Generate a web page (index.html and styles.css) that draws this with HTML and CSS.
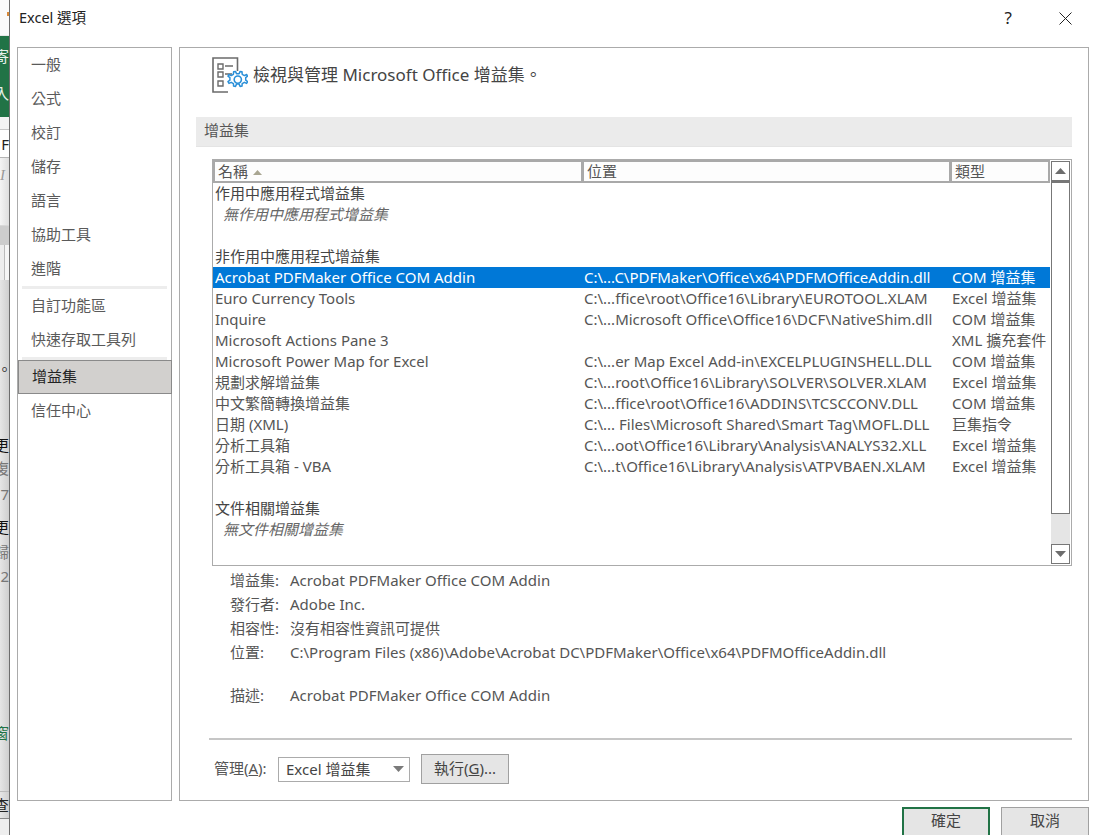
FILE: index.html
```html
<!DOCTYPE html>
<html lang="zh-Hant">
<head>
<meta charset="utf-8">
<title>Excel 選項</title>
<link rel="stylesheet" href="styles.css">
</head>
<body>
<div class="behind">
  <div class="b b-top"><span class="tick"></span></div>
  <div class="b b-green"><span class="b-g1">寄</span><span class="b-g2">入</span></div>
  <div class="b b-gap"></div>
  <div class="b b-f">F</div>
  <div class="b b-it">I</div>
  <div class="b b-band"></div>
  <div class="b b-box"></div>
  <div class="b b-dot">。</div>
  <div class="b t1 k">更</div>
  <div class="b t2">復</div>
  <div class="b t3">7</div>
  <div class="b t4 k">更</div>
  <div class="b t5">歸</div>
  <div class="b t6">2</div>
  <div class="b b-win">窗</div>
  <div class="b b-q">查</div>
  <div class="b b-end"></div>
</div>
<div class="dialog">
  <header class="titlebar">
    <span class="title">Excel 選項</span>
    <span class="help">?</span>
    <svg class="close" width="13" height="13" viewBox="0 0 13 13"><path d="M.5.5l12 12M12.5.5l-12 12" stroke="#222" fill="none"/></svg>
  </header>
  <div class="panes">
    <nav class="nav">
      <div class="nav-item">一般</div>
      <div class="nav-item">公式</div>
      <div class="nav-item">校訂</div>
      <div class="nav-item">儲存</div>
      <div class="nav-item">語言</div>
      <div class="nav-item">協助工具</div>
      <div class="nav-item">進階</div>
      <div class="nav-sep"></div>
      <div class="nav-item">自訂功能區</div>
      <div class="nav-item">快速存取工具列</div>
      <div class="nav-sep"></div>
      <div class="nav-item selected">增益集</div>
      <div class="nav-item">信任中心</div>
    </nav>
    <main class="main">
      <div class="heading">
        <svg class="heading-icon" width="36" height="38" viewBox="0 0 36 38">
          <path d="M25.5 14V1H1v34h15" fill="none" stroke="#6b6b6b" stroke-width="1.6"/>
          <path d="M6 7h5v5H6zM6 15h5v5H6zM6 24h5v5H6z" fill="none" stroke="#6b6b6b" stroke-width="1.4"/>
          <path d="M13 9h8M13 17h7" stroke="#6b6b6b" stroke-width="1.3" fill="none"/>
          <path d="M21.6 14.8l1.9-.4 1 2.4 2.6 0 1-2.4 1.9.4.2 2.5 2.2 1.3 2.2-1.1 1 1.7-1.9 1.5v2.5l1.9 1.5-1 1.7-2.2-1.1-2.2 1.3-.2 2.5-1.9.4-1-2.4h-2.6l-1 2.4-1.9-.4-.2-2.5-2.2-1.3-2.2 1.1-1-1.7 1.9-1.5v-2.5l-1.9-1.5 1-1.7 2.2 1.1 2.2-1.3z" fill="#fff" stroke="#2a8fd8" stroke-width="1.5" stroke-linejoin="round"/>
          <circle cx="25.8" cy="22.6" r="3.6" fill="#fff" stroke="#2a8fd8" stroke-width="1.6"/>
        </svg>
        <span class="heading-text">檢視與管理 Microsoft Office 增益集。</span>
      </div>
      <div class="section">增益集</div>
      <div class="list">
        <div class="list-body">
          <div class="thead">
            <div class="th c1">名稱<svg class="sort" width="9" height="5" viewBox="0 0 9 5"><path d="M4.5 0L9 5H0z" fill="#a9a692"/></svg></div>
            <div class="th c2">位置</div>
            <div class="th c3">類型</div>
          </div>
          <div class="row group"><span class="c1">作用中應用程式增益集</span></div>
          <div class="row empty"><span class="c1">無作用中應用程式增益集</span></div>
          <div class="row"></div>
          <div class="row group"><span class="c1">非作用中應用程式增益集</span></div>
          <div class="row sel"><span class="c1">Acrobat PDFMaker Office COM Addin</span><span class="c2">C:\...C\PDFMaker\Office\x64\PDFMOfficeAddin.dll</span><span class="c3">COM 增益集</span></div>
          <div class="row"><span class="c1">Euro Currency Tools</span><span class="c2">C:\...ffice\root\Office16\Library\EUROTOOL.XLAM</span><span class="c3">Excel 增益集</span></div>
          <div class="row"><span class="c1">Inquire</span><span class="c2">C:\...Microsoft Office\Office16\DCF\NativeShim.dll</span><span class="c3">COM 增益集</span></div>
          <div class="row"><span class="c1">Microsoft Actions Pane 3</span><span class="c2"></span><span class="c3">XML 擴充套件</span></div>
          <div class="row"><span class="c1">Microsoft Power Map for Excel</span><span class="c2">C:\...er Map Excel Add-in\EXCELPLUGINSHELL.DLL</span><span class="c3">COM 增益集</span></div>
          <div class="row"><span class="c1">規劃求解增益集</span><span class="c2">C:\...root\Office16\Library\SOLVER\SOLVER.XLAM</span><span class="c3">Excel 增益集</span></div>
          <div class="row"><span class="c1">中文繁簡轉換增益集</span><span class="c2">C:\...ffice\root\Office16\ADDINS\TCSCCONV.DLL</span><span class="c3">COM 增益集</span></div>
          <div class="row"><span class="c1">日期 (XML)</span><span class="c2">C:\... Files\Microsoft Shared\Smart Tag\MOFL.DLL</span><span class="c3">巨集指令</span></div>
          <div class="row"><span class="c1">分析工具箱</span><span class="c2">C:\...oot\Office16\Library\Analysis\ANALYS32.XLL</span><span class="c3">Excel 增益集</span></div>
          <div class="row"><span class="c1">分析工具箱 - VBA</span><span class="c2">C:\...t\Office16\Library\Analysis\ATPVBAEN.XLAM</span><span class="c3">Excel 增益集</span></div>
          <div class="row"></div>
          <div class="row group"><span class="c1">文件相關增益集</span></div>
          <div class="row empty"><span class="c1">無文件相關增益集</span></div>
        </div>
        <div class="scrollbar">
          <div class="sb-btn"><svg width="11" height="6" viewBox="0 0 11 6"><path d="M5.5 0L11 6H0z" fill="#6d6d6d"/></svg></div>
          <div class="sb-thumb"></div>
          <div class="sb-track"></div>
          <div class="sb-btn"><svg width="11" height="6" viewBox="0 0 11 6"><path d="M0 0h11L5.5 6z" fill="#6d6d6d"/></svg></div>
        </div>
      </div>
      <dl class="details">
        <div class="detail"><dt>增益集:</dt><dd>Acrobat PDFMaker Office COM Addin</dd></div>
        <div class="detail"><dt>發行者:</dt><dd>Adobe Inc.</dd></div>
        <div class="detail"><dt>相容性:</dt><dd>沒有相容性資訊可提供</dd></div>
        <div class="detail"><dt>位置:</dt><dd>C:\Program Files (x86)\Adobe\Acrobat DC\PDFMaker\Office\x64\PDFMOfficeAddin.dll</dd></div>
        <div class="detail detail-desc"><dt>描述:</dt><dd>Acrobat PDFMaker Office COM Addin</dd></div>
      </dl>
      <div class="footer-rule"></div>
      <div class="manage">
        <span class="manage-label">管理(<u>A</u>):</span>
        <div class="select"><span class="select-text">Excel 增益集</span><svg width="11" height="6" viewBox="0 0 11 6"><path d="M0 0h11L5.5 6z" fill="#7a7a7a"/></svg></div>
        <div class="btn go">執行(<u>G</u>)...</div>
      </div>
    </main>
  </div>
  <div class="actions">
    <div class="btn action primary">確定</div>
    <div class="btn action">取消</div>
  </div>
</div>
</body>
</html>
```

FILE: styles.css
```css
* { box-sizing: border-box; }
html, body { margin: 0; height: 835px; overflow: hidden; }
body {
  display: flex;
  background: #fff;
  color: #444;
  font-family: "Noto Sans", "Noto Sans CJK TC", sans-serif;
  font-size: 15px;
}
u { text-underline-offset: 1px; }

/* Sliver of the Excel window behind the dialog */
.behind {
  width: 10px;
  flex: none;
  height: 835px;
  overflow: hidden;
  border-right: 1px solid #6e6e6e;
  background: linear-gradient(to right, #e6e6e6, #cfcfcf);
  color: #777;
}
.b { width: 9px; overflow: hidden; white-space: nowrap; direction: rtl; font-size: 15px; line-height: 16px; }
.b-top { height: 36px; background: #fafafa; border-bottom: 1px solid #e8e8e8; }
.tick { display: block; width: 2px; height: 4px; margin: 12px 0 0 2px; background: #d8893a; }
.b-green { height: 81px; background: #217346; color: #e8f2ec; display: flex; flex-direction: column; padding-top: 12px; gap: 21px; }
.b-gap { height: 13px; background: #f3f3f3; border-bottom: 1px solid #c6c6c6; }
.b-f { height: 28px; line-height: 28px; background: #fff; border-bottom: 1px solid #b5b5b5; color: #222; }
.b-it { height: 67px; padding-top: 9px; color: #999; font-style: italic; font-family: "Liberation Serif", serif; direction: ltr; background: linear-gradient(to right, #f4f4f4, #dedede); }
.b-band { height: 20px; background: #cdcdcd; border-top: 1px solid #d8d8d8; }
.b-box { height: 35px; background: linear-gradient(to right, #eee 0, #eee 4px, #bbb 4px, #bbb 5px, #f6f6f6 5px); }
.b-dot { height: 157px; padding-top: 81px; color: #333; direction: ltr; text-indent: -3px; }
.k { color: #111; }
.t1 { height: 23px; }
.t2 { height: 26px; }
.t3 { height: 33px; }
.t4 { height: 25px; }
.t5 { height: 24px; }
.t6 { height: 157px; }
.b-win { height: 67px; color: #217346; border-bottom: 1px solid #bbb; }
.b-q { height: 27px; line-height: 27px; color: #222; border-bottom: 1px solid #888; }
.b-end { height: 16px; background: #eee; }

.dialog { flex: 1; min-width: 0; display: flex; flex-direction: column; height: 835px; padding-left: 7px; padding-right: 6px; }
.titlebar { height: 47px; flex: none; display: flex; align-items: center; margin-left: -7px; padding-left: 9px; padding-bottom: 11px; color: #222; }
.title { font-size: 14.5px; flex: 1; margin-bottom: 4px; }
.help { font-size: 17px; line-height: 20px; margin-right: 47px; }
.close { margin-right: 17px; }

.panes { display: flex; gap: 7px; height: 754px; flex: none; }
.nav { width: 155px; flex: none; border: 1px solid #ababab; }
.nav-item { height: 34px; line-height: 33px; padding-left: 13px; font-size: 15px; color: #5a5a5a; }
.nav-item.selected { background: #d2d0ce; border: 1px solid #8a8a8a; margin-right: -1px; color: #222; line-height: 30px; }
.nav-sep { height: 3px; margin: 0 4px; background: #ededed; }

.main { flex: 1; min-width: 0; border: 1px solid #ababab; padding: 0 16px; display: flex; flex-direction: column; }
.heading { height: 69px; flex: none; display: flex; align-items: center; padding: 0 0 14px 16px; gap: 5px; }
.heading-icon { flex: none; }
.heading-text { font-size: 17px; color: #444; padding-bottom: 4px; }
.section { height: 30px; flex: none; line-height: 27px; background: #ebebeb; padding-left: 8px; color: #555; border-bottom: 1px solid #e4e4e4; }

.list { margin: 12px 0 0 16px; height: 407px; flex: none; border: 1px solid #ababab; display: flex; }
.list-body { flex: 1; min-width: 0; }
.thead { height: 23px; display: flex; border: 2px solid #a9a9a9; background: #a9a9a9; gap: 3px; }
.th { background: #fdfdfd; line-height: 18px; padding-left: 3px; color: #555; }
.th.c1 { width: 366px; }
.th.c2 { width: 365px; }
.th.c3 { flex: 1; }
.sort { margin-left: 5px; vertical-align: 2px; }
.row { height: 21px; line-height: 20px; display: flex; white-space: nowrap; color: #555; }
.row .c1 { width: 369px; padding-left: 2px; flex: none; }
.row .c2 { width: 368px; padding-left: 2px; flex: none; }
.row .c3 { flex: 1; padding-left: 2px; overflow: hidden; }
.row.group { color: #444; }
.row.empty .c1 { padding-left: 10px; font-style: italic; color: #666; }
.row.sel { background: #0078d7; color: #fff; }

.scrollbar { width: 21px; flex: none; display: flex; flex-direction: column; padding: 1px; }
.sb-btn { height: 20px; flex: none; border: 1px solid #777; display: flex; align-items: center; justify-content: center; }
.sb-thumb { height: 333px; flex: none; border: 1px solid #777; border-top-width: 2px; }
.sb-track { flex: 1; background: #e5e5e5; }

.details { margin: 2px 0 0 34px; flex: none; color: #555; }
.detail { display: flex; height: 24px; line-height: 24px; }
.detail dt { width: 60px; }
.detail dd { margin: 0; }
.detail-desc { margin-top: 19px; }

.footer-rule { height: 2px; flex: none; margin: 31px 0 0 13px; background: #c6c6c6; }
.manage { display: flex; align-items: center; margin: 14px 0 0 18px; }
.manage-label { width: 64px; flex: none; color: #555; padding-bottom: 3px; }
.select { width: 132px; height: 25px; border: 1px solid #ababab; display: flex; align-items: center; justify-content: space-between; padding: 0 5px 0 7px; color: #444; margin-right: 11px; }
.select-text { padding-bottom: 2px; }
.btn { background: #e5e5e5; border: 1px solid #a0a0a0; color: #444; text-align: center; }
.go { width: 88px; height: 30px; line-height: 26px; }

.actions { display: flex; justify-content: flex-end; gap: 11px; padding-top: 6px; flex: none; }
.action { width: 88px; height: 40px; line-height: 25px; }
.primary { border: 2px solid #217346; line-height: 23px; }
```
